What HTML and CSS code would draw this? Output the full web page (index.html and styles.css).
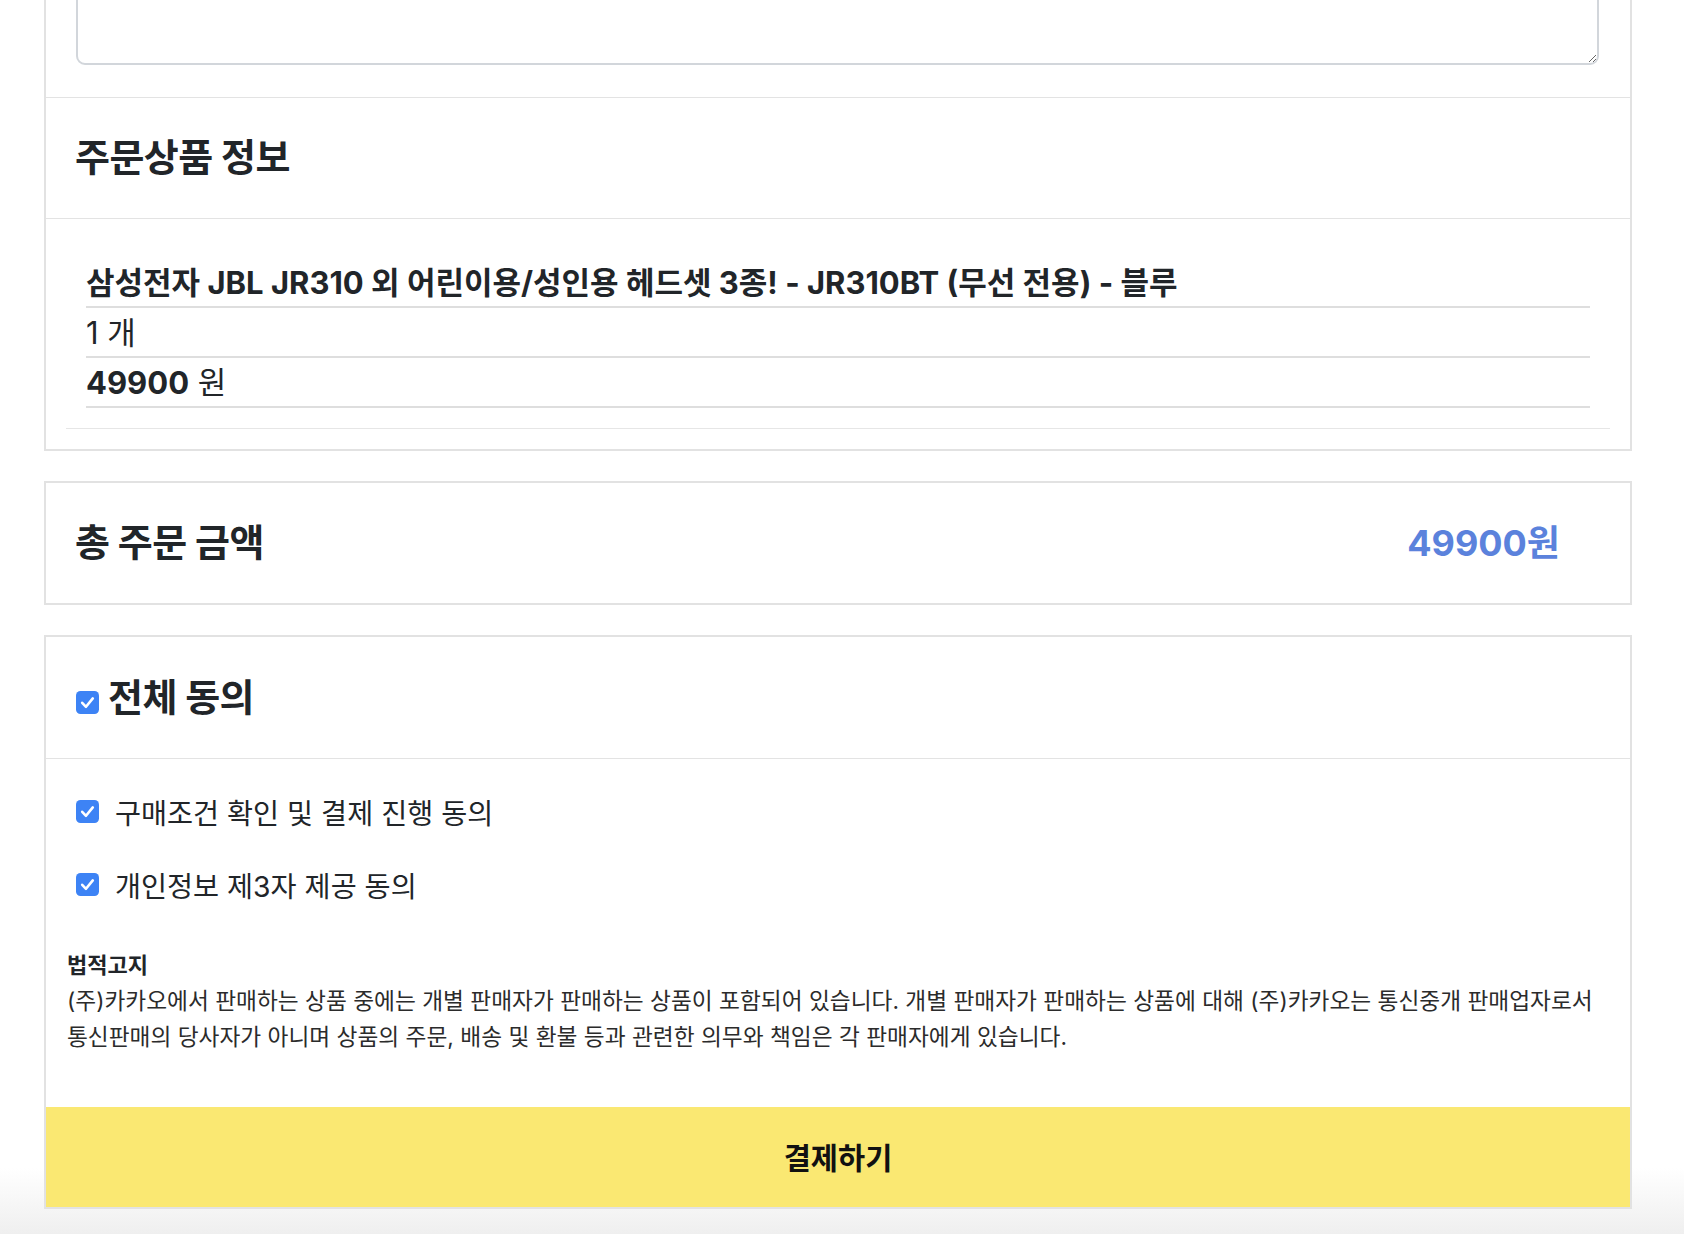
FILE: index.html
```html
<!DOCTYPE html>
<html lang="ko">
<head>
<meta charset="utf-8">
<title>주문서</title>
<link rel="stylesheet" href="styles.css">
</head>
<body>
<div class="page">
  <section class="card card-order">
    <div class="memo-wrap">
      <textarea class="memo"></textarea>
    </div>
    <div class="sec-head">
      <h3 class="title">주문상품 정보</h3>
    </div>
    <div class="products">
      <ul class="prod-list">
        <li class="prod-row prod-name">삼성전자 JBL JR310 외 어린이용/성인용 헤드셋 3종! - JR310BT (무선 전용) - 블루</li>
        <li class="prod-row">1 개</li>
        <li class="prod-row"><strong>49900</strong> 원</li>
      </ul>
    </div>
  </section>

  <section class="card card-total">
    <h3 class="title">총 주문 금액</h3>
    <span class="total-price">49900원</span>
  </section>

  <section class="card card-agree">
    <div class="sec-head agree-head">
      <span class="cb cb-head"><svg viewBox="0 0 23 23" width="23" height="23"><rect x="0" y="0" width="23" height="23" rx="4.5" fill="#3d83f5"/><path d="M6.2 11.8 L10 15.8 L16.8 7.4" fill="none" stroke="#fff" stroke-width="2.6" stroke-linecap="round" stroke-linejoin="round"/></svg></span>
      <h3 class="title">전체 동의</h3>
    </div>
    <div class="agree-list">
      <label class="agree-item">
        <span class="cb"><svg viewBox="0 0 23 23" width="23" height="23"><rect x="0" y="0" width="23" height="23" rx="4.5" fill="#3d83f5"/><path d="M6.2 11.8 L10 15.8 L16.8 7.4" fill="none" stroke="#fff" stroke-width="2.6" stroke-linecap="round" stroke-linejoin="round"/></svg></span>
        <span class="agree-text">구매조건 확인 및 결제 진행 동의</span>
      </label>
      <label class="agree-item">
        <span class="cb"><svg viewBox="0 0 23 23" width="23" height="23"><rect x="0" y="0" width="23" height="23" rx="4.5" fill="#3d83f5"/><path d="M6.2 11.8 L10 15.8 L16.8 7.4" fill="none" stroke="#fff" stroke-width="2.6" stroke-linecap="round" stroke-linejoin="round"/></svg></span>
        <span class="agree-text">개인정보 제3자 제공 동의</span>
      </label>
    </div>
    <div class="legal">
      <div class="legal-title">법적고지</div>
      <p class="legal-text">(주)카카오에서 판매하는 상품 중에는 개별 판매자가 판매하는 상품이 포함되어 있습니다. 개별 판매자가 판매하는 상품에 대해 (주)카카오는 통신중개 판매업자로서<br>통신판매의 당사자가 아니며 상품의 주문, 배송 및 환불 등과 관련한 의무와 책임은 각 판매자에게 있습니다.</p>
    </div>
    <button class="pay-btn" type="button">결제하기</button>
  </section>
</div>
</body>
</html>
```

FILE: styles.css
```css
html {
  background: linear-gradient(to bottom, #ffffff 0, #ffffff 1168px, #efefef 1234px) no-repeat;
  min-height: 100%;
}

body {
  margin: 0;
  font-family: Inter, "Noto Sans CJK KR", sans-serif;
  color: #212529;
}

.page {
  width: 1588px;
  margin-left: 44px;
  padding-bottom: 24px;
}

.card {
  border: 2px solid #e2e2e2;
  background: #fff;
  box-sizing: border-box;
}

.card-order {
  margin-top: -80px;
}

.memo-wrap {
  padding: 30px 31px 32px 30px;
  border-bottom: 1px solid #e3e3e3;
}

.memo {
  display: block;
  width: 100%;
  height: 113px;
  box-sizing: border-box;
  border: 2px solid #d2d6db;
  border-radius: 9px;
  background: #fff;
  font: inherit;
}

.sec-head {
  height: 121px;
  box-sizing: border-box;
  border-bottom: 1px solid #e3e3e3;
  display: flex;
  align-items: center;
  padding: 0 29px;
}

.title {
  margin: 0;
  font-size: 38px;
  font-weight: 700;
  line-height: 1.2;
  letter-spacing: -0.015em;
  color: #212529;
}

.products {
  padding: 0 20px 20px;
}

.prod-list {
  list-style: none;
  margin: 0;
  padding: 39px 20px 20px;
  border-bottom: 1px solid #e6e6e6;
}

.prod-row {
  height: 50px;
  box-sizing: border-box;
  border-bottom: 2px solid #dedede;
  font-size: 31px;
  line-height: 50px;
  white-space: nowrap;
}

.prod-row strong {
  font-weight: 700;
}

.prod-name {
  font-weight: 700;
}

.card-total {
  margin-top: 30px;
  height: 124px;
  display: flex;
  align-items: center;
  justify-content: space-between;
  padding: 0 70px 0 29px;
}

.total-price {
  font-size: 36px;
  font-weight: 700;
  color: #5b82dc;
  margin-bottom: 6px;
}

.card-agree {
  margin-top: 30px;
}

.agree-head {
  height: 122px;
  padding: 0 30px;
  gap: 9px;
}

.cb {
  display: inline-flex;
  width: 23px;
  height: 23px;
  flex: none;
}

.cb svg {
  display: block;
}

.cb-head {
  margin-top: 10px;
}

.agree-list {
  padding: 16px 30px 0;
}

.agree-item {
  height: 73px;
  display: flex;
  align-items: center;
  gap: 16px;
}

.agree-text {
  font-size: 28.3px;
  color: #212529;
}

.legal {
  padding: 26px 21px 52px;
}

.legal-title {
  font-size: 22px;
  font-weight: 700;
  line-height: 36px;
  color: #212529;
}

.legal-text {
  margin: 0;
  font-size: 22.7px;
  line-height: 36px;
  color: #2b2b2b;
  white-space: nowrap;
}

.pay-btn {
  display: block;
  width: 100%;
  height: 100px;
  border: 0;
  margin: 0;
  background: #fae872;
  font-family: Inter, "Noto Sans CJK KR", sans-serif;
  font-size: 29.5px;
  font-weight: 700;
  color: #111;
  padding-bottom: 4px;
}
```
